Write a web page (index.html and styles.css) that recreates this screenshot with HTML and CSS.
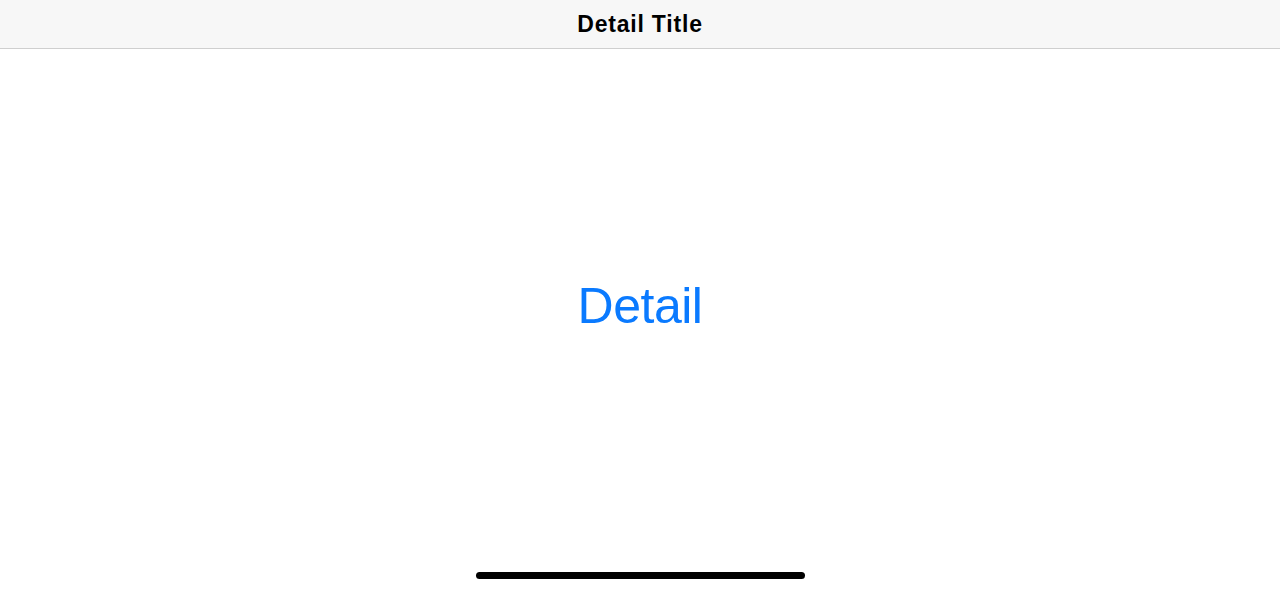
FILE: index.html
```html
<!DOCTYPE html>
<html>
<head>
<meta charset="utf-8">
<link rel="stylesheet" href="styles.css">
</head>
<body>
<div class="screen">
  <header class="navbar"><h1 class="nav-title">Detail Title</h1></header>
  <main class="content"><span class="detail">Detail</span></main>
  <footer class="home-area"><div class="home-indicator"></div></footer>
</div>
</body>
</html>
```
FILE: styles.css
```css
html, body { margin: 0; padding: 0; }
body { font-family: "Liberation Sans", Arial, sans-serif; background: #fff; }
.screen { width: 1280px; height: 592px; display: flex; flex-direction: column; overflow: hidden; }
.navbar { height: 49px; flex: 0 0 49px; box-sizing: border-box; background: #f7f7f7; border-bottom: 1px solid #cfcfcf; display: flex; align-items: center; justify-content: center; }
.nav-title { margin: 0; font-size: 23px; font-weight: bold; color: #000; letter-spacing: 0.8px; padding-top: 1px; }
.content { flex: 1; display: flex; align-items: center; justify-content: center; padding-bottom: 10px; }
.detail { color: #0a7aff; font-size: 50px; letter-spacing: -0.5px; }
.home-area { height: 20px; flex: 0 0 20px; display: flex; justify-content: center; }
.home-indicator { width: 329px; height: 7px; border-radius: 4px; background: #000; }
```
